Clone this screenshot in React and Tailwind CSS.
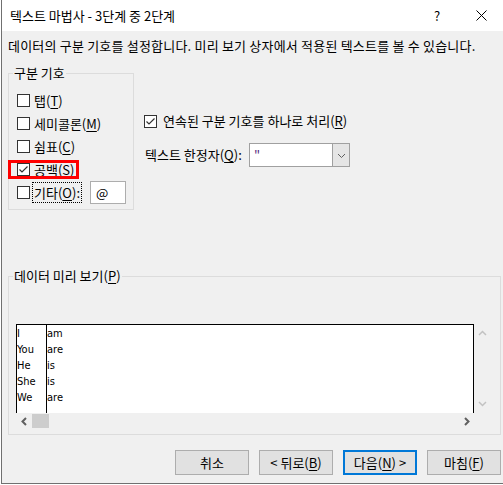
import React from 'react';

const FONT = { fontFamily: '"Noto Sans CJK KR", "Noto Sans", sans-serif' };

function CheckBox({ checked = false }) {
  return (
    <span className="w-[13px] h-[13px] border border-[#333333] bg-white flex items-center justify-center shrink-0">
      {checked && (
        <svg width="11" height="11" viewBox="0 0 11 11">
          <polyline points="1.5,5.5 4,8 9.5,2.5" fill="none" stroke="#333333" strokeWidth="1.2" />
        </svg>
      )}
    </span>
  );
}

// label with the access key underlined, e.g. 탭(T)
function Key({ text, k, tail = '' }) {
  return (
    <span className="whitespace-nowrap">
      {text}(<span className="underline underline-offset-2">{k}</span>){tail}
    </span>
  );
}

function Chevron({ dir = 'down', color = '#606060', size = 9, width = 1.3 }) {
  const pts = {
    down: '1,3 4.5,6.5 8,3',
    up: '1,6 4.5,2.5 8,6',
    left: '6,1 2.5,4.5 6,8',
    right: '3,1 6.5,4.5 3,8',
  }[dir];
  return (
    <svg width={size} height={size} viewBox="0 0 9 9">
      <polyline points={pts} fill="none" stroke={color} strokeWidth={width} />
    </svg>
  );
}

const rows = [
  ['I', 'am'],
  ['You', 'are'],
  ['He', 'is'],
  ['She', 'is'],
  ['We', 'are'],
];

export default function App() {
  return (
    <div className="w-[503px] h-[485px] bg-white text-black text-[13px] leading-[16px]" style={FONT}>
      <div className="ml-[1px] w-[502px] h-[484px] border-l border-b border-[#707070] flex flex-col">
        {/* Title bar */}
        <div className="h-[31px] bg-white flex items-center shrink-0">
          <span className="pl-[8px] flex-1">텍스트 마법사 - 3단계 중 2단계</span>
          <span className="w-[44px] flex justify-center text-[13px]">?</span>
          <span className="w-[44px] flex justify-center">
            <svg width="11" height="11" viewBox="0 0 11 11">
              <path d="M0.5 0.5 L10.5 10.5 M10.5 0.5 L0.5 10.5" stroke="#000" strokeWidth="1" />
            </svg>
          </span>
        </div>

        {/* Body */}
        <div className="flex-1 bg-[#f0f0f0] flex flex-col">
          <p className="mt-[7px] pl-[6px] tracking-[0.2px] whitespace-nowrap">
            데이터의 구분 기호를 설정합니다. 미리 보기 상자에서 적용된 텍스트를 볼 수 있습니다.
          </p>

          <div className="flex mt-[11px]">
            {/* 구분 기호 group */}
            <fieldset className="ml-[6px] w-[126px] h-[145px] border border-[#dcdcdc]">
              <legend className="ml-[4px] px-[1px]">구분 기호</legend>
              <div className="pt-[8px] flex flex-col">
                <div className="h-[23px] pl-[8px] flex items-center">
                  <CheckBox />
                  <span className="ml-[4px]"><Key text="탭" k="T" /></span>
                </div>
                <div className="h-[23px] pl-[8px] flex items-center">
                  <CheckBox />
                  <span className="ml-[4px]"><Key text="세미콜론" k="M" /></span>
                </div>
                <div className="h-[23px] pl-[8px] flex items-center">
                  <CheckBox />
                  <span className="ml-[4px]"><Key text="쉼표" k="C" /></span>
                </div>
                <div className="relative h-[23px] pl-[8px] flex items-center">
                  <CheckBox checked />
                  <span className="ml-[4px]"><Key text="공백" k="S" /></span>
                  <span className="absolute left-[-1px] top-[2px] w-[71px] h-[19px] border-[3px] border-[#ff0000]" />
                </div>
                <div className="h-[23px] pl-[8px] flex items-center">
                  <CheckBox />
                  <span className="ml-[2px] h-[21px] pl-[1px] pr-[1px] flex items-center border border-dotted border-black">
                    <Key text="기타" k="O" tail=":" />
                  </span>
                  <span className="ml-[8px] w-[36px] h-[23px] bg-white border border-[#adadad] pl-[5px] flex items-center">@</span>
                </div>
              </div>
            </fieldset>

            {/* right options */}
            <div className="ml-[10px] flex flex-col">
              <div className="mt-[48px] h-[16px] flex items-center">
                <CheckBox checked />
                <span className="ml-[6px]"><Key text="연속된 구분 기호를 하나로 처리" k="R" /></span>
              </div>
              <div className="mt-[14px] flex items-center">
                <span className="w-[105px] pl-[1px]"><Key text="텍스트 한정자" k="Q" tail=":" /></span>
                <div className="w-[101px] h-[24px] border border-[#a0a0a0] bg-white flex">
                  <span className="flex-1 pl-[4px] flex items-center text-[#5a2d82]">"</span>
                  <span className="w-[17px] bg-[#e5e5e5] border-l border-[#a0a0a0] flex items-center justify-center">
                    <Chevron dir="down" color="#606060" size={9} width={1} />
                  </span>
                </div>
              </div>
            </div>
          </div>

          {/* 데이터 미리 보기 group */}
          <fieldset className="mt-[58px] ml-[6px] w-[493px] h-[167px] border border-[#dcdcdc]">
            <legend className="ml-[4px] px-[1px]"><Key text="데이터 미리 보기" k="P" /></legend>
            <div className="mt-[40px] pl-[7px] flex">
              <div className="w-[458px] flex flex-col">
                <div
                  className="h-[89px] bg-white border-t border-l border-r border-black flex text-[11px] leading-[16px] pt-[1px]"
                  style={{ fontFamily: '"DejaVu Sans Condensed", "Liberation Sans Narrow", sans-serif' }}
                >
                  <div className="w-[29px] flex flex-col">
                    {rows.map(([a]) => (
                      <span key={a} className="h-[16px]">{a}</span>
                    ))}
                  </div>
                  <div className="w-[1px] bg-black -mt-[1px]" />
                  <div className="flex flex-col">
                    {rows.map(([a, b]) => (
                      <span key={a} className="h-[16px]">{b}</span>
                    ))}
                  </div>
                </div>
                <div className="h-[16px] flex items-center">
                  <span className="w-[16px] flex justify-center">
                    <Chevron dir="left" color="#606060" size={9} width={2} />
                  </span>
                  <span className="w-[17px] h-[14px] bg-[#cdcdcd]" />
                  <span className="flex-1" />
                  <span className="w-[16px] flex justify-center">
                    <Chevron dir="right" color="#606060" size={9} width={2} />
                  </span>
                </div>
              </div>
              <div className="w-[17px] h-[89px] flex flex-col items-center justify-between py-[5px]">
                <Chevron dir="up" color="#c2c2c2" size={9} width={1.5} />
                <Chevron dir="down" color="#c2c2c2" size={9} width={1.5} />
              </div>
            </div>
          </fieldset>

          {/* Buttons */}
          <div className="mt-[15px] pr-[2px] flex justify-end gap-[10px]">
            <button className="w-[74px] h-[25px] bg-[#e1e1e1] border border-[#adadad]">취소</button>
            <button className="w-[74px] h-[25px] bg-[#e1e1e1] border border-[#adadad]">
              &lt; <Key text="뒤로" k="B" />
            </button>
            <button className="w-[74px] h-[25px] bg-[#e1e1e1] border-2 border-[#0078d7]">
              <Key text="다음" k="N" /> &gt;
            </button>
            <button className="w-[74px] h-[25px] bg-[#e1e1e1] border border-[#adadad]">
              <Key text="마침" k="F" />
            </button>
          </div>
        </div>
      </div>
    </div>
  );
}
